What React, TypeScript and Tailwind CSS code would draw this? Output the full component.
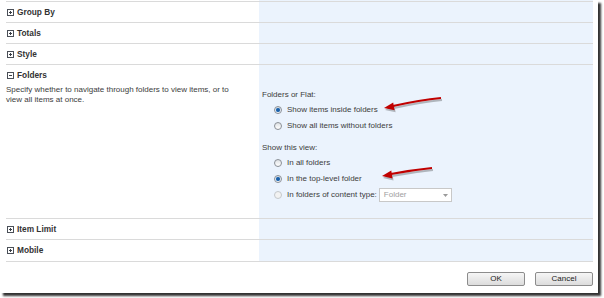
import type { ReactNode } from "react";

const border = "border-[#dadada]";

function ToggleIcon({ open }: { open?: boolean }) {
  return (
    <svg width="7" height="7" viewBox="0 0 7 7" className="shrink-0" aria-hidden>
      <rect x="0.5" y="0.5" width="6" height="6" fill="#fff" stroke="#4a4f57" />
      <path d="M2 3.5h3" stroke="#3a3f47" strokeWidth="1" />
      {!open && <path d="M3.5 2v3" stroke="#3a3f47" strokeWidth="1" />}
    </svg>
  );
}

function SectionRow({ title, open, left, right, h = "h-[20px]" }: {
  title: string;
  open?: boolean;
  left?: ReactNode;
  right?: ReactNode;
  h?: string;
}) {
  return (
    <div className={`flex border-t ${border}`}>
      <div className={`w-[253px] ${h}`}>
        <div className="flex h-[20px] items-center gap-[3px] pl-px text-[8.3px] font-bold text-[#333]">
          <ToggleIcon open={open} />
          {title}
        </div>
        {left}
      </div>
      <div className="flex-1 bg-[#ebf3fd]">{right}</div>
    </div>
  );
}

function Radio({ label, checked, disabled, children }: {
  label: string;
  checked?: boolean;
  disabled?: boolean;
  children?: ReactNode;
}) {
  return (
    <div className="flex h-[16px] items-center pl-[12px]">
      <span
        className={`flex size-[8px] items-center justify-center rounded-full border ${
          disabled ? "border-[#c4c8cc] bg-[#f2f2f2]" : "border-[#8a8f96] bg-linear-to-b from-[#dfe2e5] to-white"
        }`}
      >
        {checked && <span className="size-[4px] rounded-full bg-[#1a5fa8] shadow-[0_0_1px_#6fb3ef]" />}
      </span>
      <span className="ml-[5px]">{label}</span>
      {children}
    </div>
  );
}

function Button({ children }: { children: ReactNode }) {
  return (
    <button
      type="button"
      className="flex h-[14px] w-[58px] items-center justify-center rounded-[2px] border border-[#8c8c8c] bg-linear-to-b from-[#f6f6f6] to-[#dcdcdc] text-[8px] text-[#222]"
    >
      {children}
    </button>
  );
}

export default function App() {
  return (
    <div className="relative h-[298px] w-[604px] overflow-hidden bg-white font-['Liberation_Sans',Arial,sans-serif] leading-[10px] text-[#3c3c3c]">
      <div className="h-[293px] w-[598px] bg-white pl-[6px] pr-[5px] shadow-[3px_3px_2px_rgba(0,0,0,0.8)]">
        <div className="flex h-px">
          <div className="w-[253px]" />
          <div className="flex-1 bg-[#ebf3fd]" />
        </div>
        <SectionRow title="Group By" />
        <SectionRow title="Totals" />
        <SectionRow title="Style" />
        <SectionRow
          title="Folders"
          open
          h="h-[153px]"
          left={
            <p className="w-[228px] text-[8px]">
              Specify whether to navigate through folders to view items, or to view all items at once.
            </p>
          }
          right={
            <div className="pl-[3px] pt-[25px] text-[8px]">
              <p>Folders or Flat:</p>
              <div className="mt-[2px]">
                <Radio label="Show items inside folders" checked />
                <Radio label="Show all items without folders" />
              </div>
              <p className="mt-[9px]">Show this view:</p>
              <div className="mt-[2px]">
                <Radio label="In all folders" />
                <Radio label="In the top-level folder" checked />
                <Radio label="In folders of content type:" disabled>
                  <span className="ml-[2px] flex h-[14px] w-[73px] items-center justify-between border border-[#c8c8c8] bg-white pl-[4px] pr-[3px] text-[#a0a0a0]">
                    Folder
                    <svg width="5" height="3" viewBox="0 0 5 3" aria-hidden>
                      <path d="M0 0h5L2.5 3z" fill="#9a9a9a" />
                    </svg>
                  </span>
                </Radio>
              </div>
            </div>
          }
        />
        <SectionRow title="Item Limit" />
        <SectionRow title="Mobile" h="h-[21px]" />
        <div className={`border-t ${border}`} />
        <div className="mt-[10px] flex justify-end gap-[10px]">
          <Button>OK</Button>
          <Button>Cancel</Button>
        </div>
      </div>

      <svg className="pointer-events-none absolute inset-0" width="604" height="298" aria-hidden>
        <g opacity="0.25" transform="translate(1 2)">
          <path d="M441 98 Q420 100 393 106" stroke="#000" strokeWidth="2" fill="none" />
          <polygon points="384,108 393.2,102.4 394.6,110.2" fill="#000" />
          <path d="M432 168 Q412 170 391 174" stroke="#000" strokeWidth="2" fill="none" />
          <polygon points="382,176 391.3,170.5 392.5,178.4" fill="#000" />
        </g>
        <path d="M441 98 Q420 100 393 106" stroke="#c00000" strokeWidth="2" fill="none" />
        <polygon points="384,108 393.2,102.4 394.6,110.2" fill="#c00000" />
        <path d="M432 168 Q412 170 391 174" stroke="#c00000" strokeWidth="2" fill="none" />
        <polygon points="382,176 391.3,170.5 392.5,178.4" fill="#c00000" />
      </svg>
    </div>
  );
}
